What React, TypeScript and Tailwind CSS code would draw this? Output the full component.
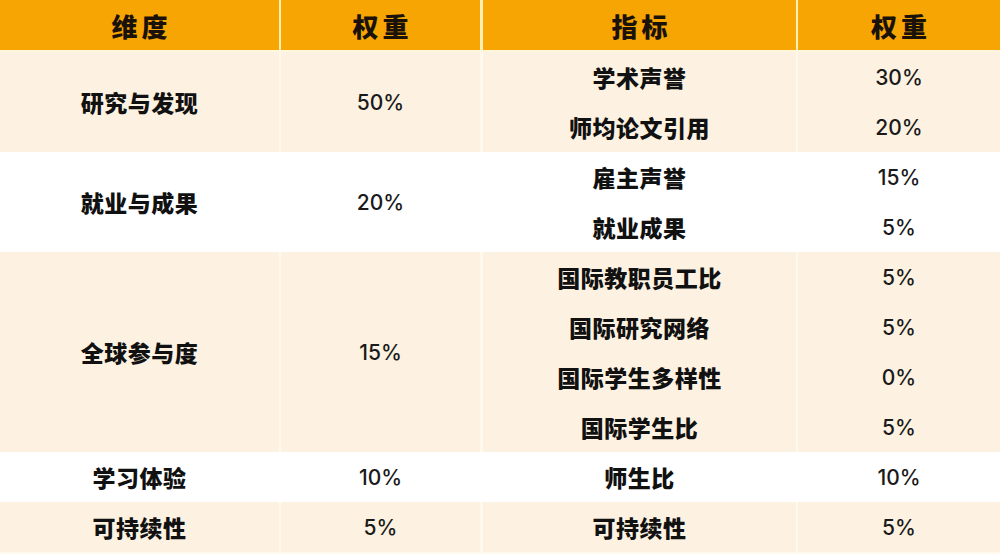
import React from "react";

const cjk = { fontFamily: '"Noto Sans CJK SC", "Noto Sans", sans-serif' };

type Group = {
  dim: string;
  w: string;
  items: [string, string][];
  white: boolean;
};

const groups: Group[] = [
  { dim: "研究与发现", w: "50%", items: [["学术声誉", "30%"], ["师均论文引用", "20%"]], white: false },
  { dim: "就业与成果", w: "20%", items: [["雇主声誉", "15%"], ["就业成果", "5%"]], white: true },
  {
    dim: "全球参与度",
    w: "15%",
    items: [
      ["国际教职员工比", "5%"],
      ["国际研究网络", "5%"],
      ["国际学生多样性", "0%"],
      ["国际学生比", "5%"],
    ],
    white: false,
  },
  { dim: "学习体验", w: "10%", items: [["师生比", "10%"]], white: true },
  { dim: "可持续性", w: "5%", items: [["可持续性", "5%"]], white: false },
];

const spanCls: Record<number, string> = {
  1: "row-span-1",
  2: "row-span-2",
  4: "row-span-4",
};

const gridCols = "grid grid-cols-[279px_2px_199px_3px_313px_2px_202px]";

function Cjk({ children }: { children: React.ReactNode }) {
  return (
    <span className="text-[23px] font-black tracking-[0.5px] text-[#111111]" style={cjk}>
      {children}
    </span>
  );
}

function Pct({ children }: { children: React.ReactNode }) {
  return (
    <span className="text-[21px] font-medium text-[#1a1a1a] translate-y-[1px]" style={{ fontFamily: 'Inter, "Noto Sans", sans-serif' }}>
      {children}
    </span>
  );
}

export default function App() {
  return (
    <div className="w-[1000px] h-[554px] overflow-hidden bg-[#FFF9EE]">
      <div className={`${gridCols} h-[50px] bg-[#FFF0B8]`}>
        {["维度", "", "权重", "", "指标", "", "权重"].map((t, i) =>
          t === "" ? (
            <div key={i} />
          ) : (
            <div key={i} className="flex items-center justify-center bg-[#F6A503]">
              <span className="text-[26px] font-black tracking-[4px] pl-[4px] text-[#1a1208]" style={cjk}>
                {t}
              </span>
            </div>
          )
        )}
      </div>
      <div className="h-[2px] bg-[#FFF6DC]" />
      {groups.map((g, gi) => {
        const n = g.items.length;
        const cell = g.white ? "bg-white" : "bg-[#FDF2E1]";
        const sep = g.white ? "bg-white" : "bg-[#FFF8EC]";
        return (
          <div key={gi} className={`${gridCols} ${g.white ? "bg-white" : "bg-[#FFF8EC]"}`}>
            <div className={`${spanCls[n]} ${cell} flex items-center justify-center`}>
              <Cjk>{g.dim}</Cjk>
            </div>
            <div className={`${spanCls[n]} ${sep}`} />
            <div className={`${spanCls[n]} ${cell} flex items-center justify-center`}>
              <Pct>{g.w}</Pct>
            </div>
            <div className={`${spanCls[n]} ${sep}`} />
            {g.items.map(([name, w], ii) => (
              <React.Fragment key={ii}>
                <div className={`h-[50px] ${cell} flex items-center justify-center`}>
                  <Cjk>{name}</Cjk>
                </div>
                <div className={sep} />
                <div className={`h-[50px] ${cell} flex items-center justify-center`}>
                  <Pct>{w}</Pct>
                </div>
              </React.Fragment>
            ))}
          </div>
        );
      })}
    </div>
  );
}
